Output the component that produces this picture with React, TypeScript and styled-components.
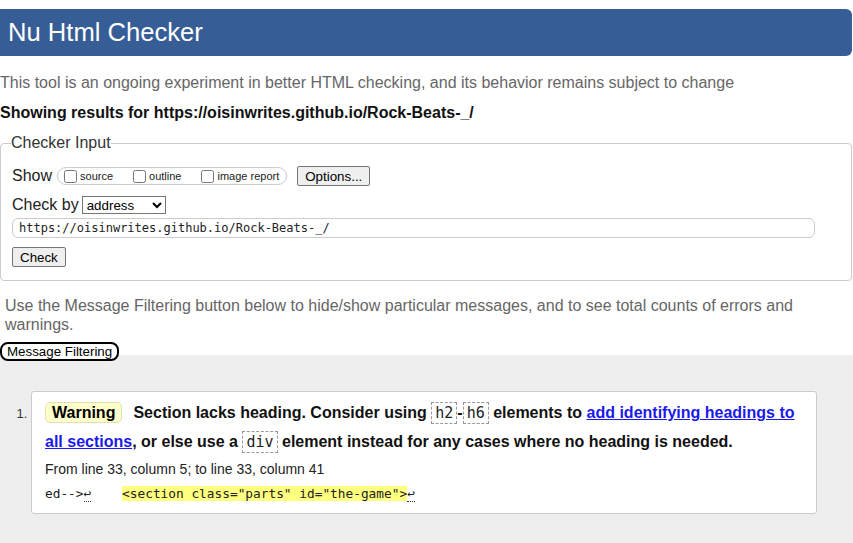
import styled, { createGlobalStyle } from "styled-components";

const GlobalStyle = createGlobalStyle`
  html, body {
    margin: 0;
    padding: 0;
    background: #fff;
  }
  body {
    font-family: "Liberation Sans", Arial, sans-serif;
    font-size: 16px;
    color: #222;
    overflow: hidden;
  }
`;

const mono = `"DejaVu Sans Mono", "Liberation Mono", monospace`;

const Page = styled.div`
  display: flex;
  flex-direction: column;
  min-height: 100vh;
  width: 853px;
`;

const Header = styled.h1`
  margin: 9px 0 0;
  width: 852px;
  height: 47px;
  box-sizing: border-box;
  padding: 0 8px;
  background: #365d95;
  border-radius: 0 6px 6px 0;
  color: #fff;
  font-size: 25.6px;
  font-weight: normal;
  line-height: 46px;
`;

const Intro = styled.p`
  margin: 18px 0 0;
  color: #666;
  line-height: 18.4px;
`;

const Showing = styled.p`
  margin: 12px 0 0;
  font-weight: bold;
  color: #111;
  line-height: 18.4px;
`;

const Fieldset = styled.fieldset`
  margin: 11px 1px 0 0;
  padding: 14px 10px 13px 11px;
  border: 1px solid #ccc;
  border-radius: 4px;
  min-width: 0;
`;

const Legend = styled.legend`
  margin-left: -1px;
  padding: 0;
  color: #333;
  line-height: 18.4px;
`;

const Row = styled.div<{ $gap?: number }>`
  display: flex;
  align-items: center;
  height: 20px;
  margin-top: ${({ $gap }) => $gap ?? 0}px;
`;

const RowLabel = styled.span`
  color: #222;
`;

const OptionGroup = styled.div`
  display: flex;
  align-items: center;
  box-sizing: border-box;
  height: 18px;
  margin-left: 5px;
  padding: 0 7px 0 6px;
  border: 1px solid #ccc;
  border-radius: 9px;
`;

const OptionLabel = styled.label`
  display: flex;
  align-items: center;
  font-size: 11px;
  color: #222;
  margin-right: 20px;

  &:last-child {
    margin-right: 0;
  }
`;

const Checkbox = styled.input`
  width: 13px;
  height: 13px;
  margin: 0 3px 0 0;
`;

const Button = styled.button`
  box-sizing: border-box;
  height: 20px;
  padding: 0 7px;
  font-family: "Liberation Sans", Arial, sans-serif;
  font-size: 13.33px;
  color: #000;
  background: #efefef;
  border: 1px solid #767676;
  border-radius: 2px;
`;

const OptionsButton = styled(Button)`
  margin-left: 10px;
`;

const Select = styled.select`
  box-sizing: border-box;
  width: 84px;
  height: 18px;
  margin-left: 3px;
  font-family: "Liberation Sans", Arial, sans-serif;
  font-size: 13.33px;
  color: #000;
  background: #fff;
  border: 1px solid #767676;
  border-radius: 0;
`;

const UrlInput = styled.input`
  box-sizing: border-box;
  width: 803px;
  height: 20px;
  padding: 0 6px;
  font-family: ${mono};
  font-size: 12px;
  color: #222;
  border: 1px solid #ccc;
  border-radius: 6px;
  outline: none;
`;

const Hint = styled.p`
  margin: 16px 4px 0 5px;
  color: #666;
  line-height: 18.5px;
`;

const FilterBar = styled.div`
  height: 13px;
  margin-top: 8px;
`;

const FilterButton = styled.button`
  position: relative;
  z-index: 1;
  box-sizing: border-box;
  height: 19px;
  padding: 0 5px;
  font-family: "Liberation Sans", Arial, sans-serif;
  font-size: 13.33px;
  color: #000;
  background: #fff;
  border: 2px solid #000;
  border-radius: 8px;
`;

const Results = styled.section`
  flex: 1;
  background: #eee;
  padding: 36px 36px 30px 31px;
`;

const MessageList = styled.ol`
  margin: 0;
  padding: 0;
  list-style: decimal outside;
`;

const Card = styled.li`
  background: #fff;
  border: 1px solid #ccc;
  border-radius: 3px;
  padding: 6px 13px 9px;

  &::marker {
    color: #334;
    font-size: 13px;
  }
`;

const Message = styled.p`
  margin: 0;
  font-weight: bold;
  color: #111;
  line-height: 29px;
`;

const Badge = styled.span`
  display: inline-block;
  margin-right: 11px;
  padding: 0 6px;
  line-height: 19px;
  color: #000;
  background: #ffffcc;
  border: 1px solid #e2dfb0;
  border-radius: 5px;
`;

const Code = styled.code`
  display: inline-block;
  font-family: ${mono};
  font-size: 15px;
  font-weight: normal;
  line-height: 20px;
  color: #222;
  padding: 0 3px;
  border: 1px dashed #999;
`;

const Link = styled.a`
  color: #1a1aee;
  text-decoration: underline;
`;

const Location = styled.p`
  margin: 4px 0 0;
  font-size: 14px;
  line-height: 18px;
  color: #222;
`;

const Extract = styled.p`
  margin: 6px 0 0;
  font-family: ${mono};
  font-size: 12.8px;
  line-height: 20px;
  white-space: pre;
  color: #222;
`;

const LineFeed = styled.span`
  border-bottom: 1px dotted #333;
`;

const Highlight = styled.mark`
  background: #ffff80;
  color: #222;
`;

export default function App() {
  return (
    <Page>
      <GlobalStyle />
      <Header>Nu Html Checker</Header>
      <Intro>
        This tool is an ongoing experiment in better HTML checking, and its behavior remains subject to change
      </Intro>
      <Showing>Showing results for https://oisinwrites.github.io/Rock-Beats-_/</Showing>

      <Fieldset>
        <Legend>Checker Input</Legend>
        <Row>
          <RowLabel>Show</RowLabel>
          <OptionGroup>
            <OptionLabel>
              <Checkbox type="checkbox" />
              source
            </OptionLabel>
            <OptionLabel>
              <Checkbox type="checkbox" />
              outline
            </OptionLabel>
            <OptionLabel>
              <Checkbox type="checkbox" />
              image report
            </OptionLabel>
          </OptionGroup>
          <OptionsButton type="button">Options...</OptionsButton>
        </Row>
        <Row $gap={9}>
          <RowLabel>Check by</RowLabel>
          <Select defaultValue="address">
            <option value="address">address</option>
            <option value="upload">file upload</option>
            <option value="text">text input</option>
          </Select>
        </Row>
        <Row $gap={3}>
          <UrlInput type="text" defaultValue="https://oisinwrites.github.io/Rock-Beats-_/" />
        </Row>
        <Row $gap={9}>
          <Button type="button">Check</Button>
        </Row>
      </Fieldset>

      <Hint>
        Use the Message Filtering button below to hide/show particular messages, and to see total counts of errors and
        warnings.
      </Hint>
      <FilterBar>
        <FilterButton type="button">Message Filtering</FilterButton>
      </FilterBar>

      <Results>
        <MessageList>
          <Card>
            <Message>
              <Badge>Warning</Badge>
              Section lacks heading. Consider using <Code>h2</Code>-<Code>h6</Code> elements to{" "}
              <Link href="#">add identifying headings to all sections</Link>, or else use a <Code>div</Code> element
              instead for any cases where no heading is needed.
            </Message>
            <Location>From line 33, column 5; to line 33, column 41</Location>
            <Extract>
              ed--&gt;<LineFeed>↩</LineFeed>
              {"    "}
              <Highlight>&lt;section class="parts" id="the-game"&gt;</Highlight>
              <LineFeed>↩</LineFeed>
            </Extract>
          </Card>
        </MessageList>
      </Results>
    </Page>
  );
}
